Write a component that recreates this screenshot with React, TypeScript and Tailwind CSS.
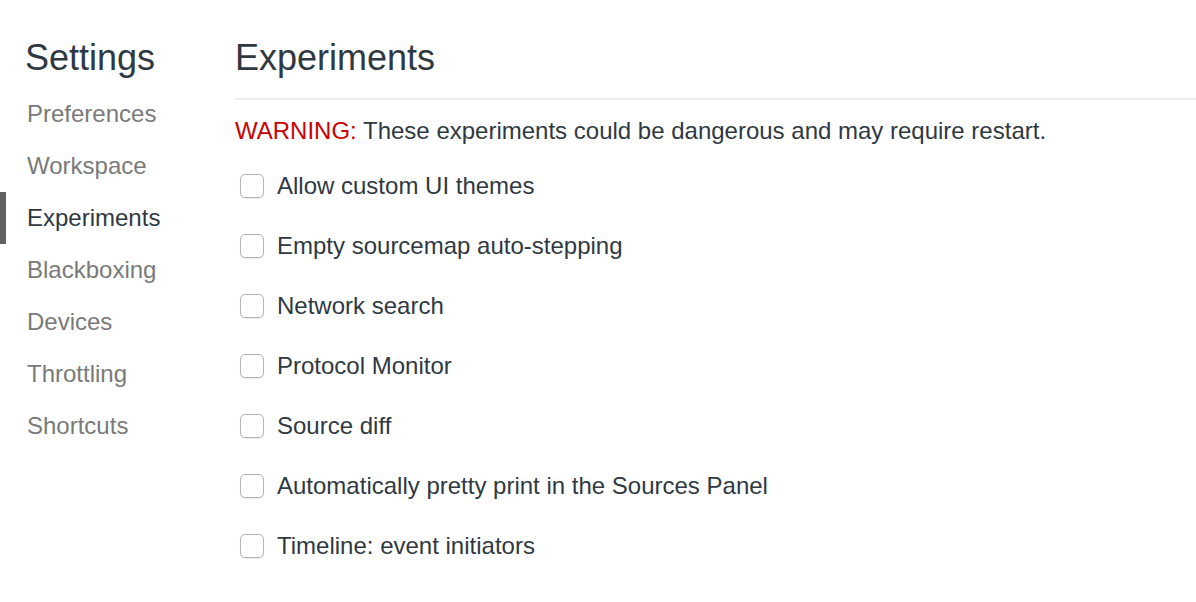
const sections = ['Preferences', 'Workspace', 'Experiments', 'Blackboxing', 'Devices', 'Throttling', 'Shortcuts'];

const experiments = [
  'Allow custom UI themes',
  'Empty sourcemap auto-stepping',
  'Network search',
  'Protocol Monitor',
  'Source diff',
  'Automatically pretty print in the Sources Panel',
  'Timeline: event initiators',
];

export default function App() {
  const active = 'Experiments';

  return (
    <div className="flex h-[602px] w-[1196px] overflow-hidden bg-white font-['Liberation_Sans',Arial,sans-serif] text-[#303942]">
      {/* Sidebar */}
      <div className="w-[235px] shrink-0 pt-[40px]">
        <h1 className="pl-[25px] text-[36px] leading-[36px] font-normal">Settings</h1>
        <ul className="mt-[12px]">
          {sections.map((s) => (
            <li
              key={s}
              className={
                s === active
                  ? 'flex h-[52px] items-center border-l-[6px] border-[#616161] pl-[21px] text-[24px] leading-[24px] text-[#303942]'
                  : 'flex h-[52px] items-center pl-[27px] text-[24px] leading-[24px] text-[#7a7a7a]'
              }
            >
              {s}
            </li>
          ))}
        </ul>
      </div>

      {/* Content */}
      <div className="flex-1 pt-[40px]">
        <h2 className="pb-[22px] text-[36px] leading-[36px] font-normal">Experiments</h2>
        <div className="border-t-2 border-[#eeeeee]" />
        <p className="mt-[19px] text-[24px] leading-[24px]">
          <span className="text-[#cc0000]">WARNING:</span> These experiments could be dangerous and may require restart.
        </p>
        <div className="mt-[13px]">
          {experiments.map((e) => (
            <label key={e} className="flex h-[60px] items-center">
              <span className="ml-[5px] h-[24px] w-[24px] rounded-[5px] border border-[#b4b4b4] bg-white shadow-[0_1px_1px_rgba(0,0,0,0.08)]" />
              <span className="ml-[13px] text-[24px] leading-[24px]">{e}</span>
            </label>
          ))}
        </div>
      </div>
    </div>
  );
}
